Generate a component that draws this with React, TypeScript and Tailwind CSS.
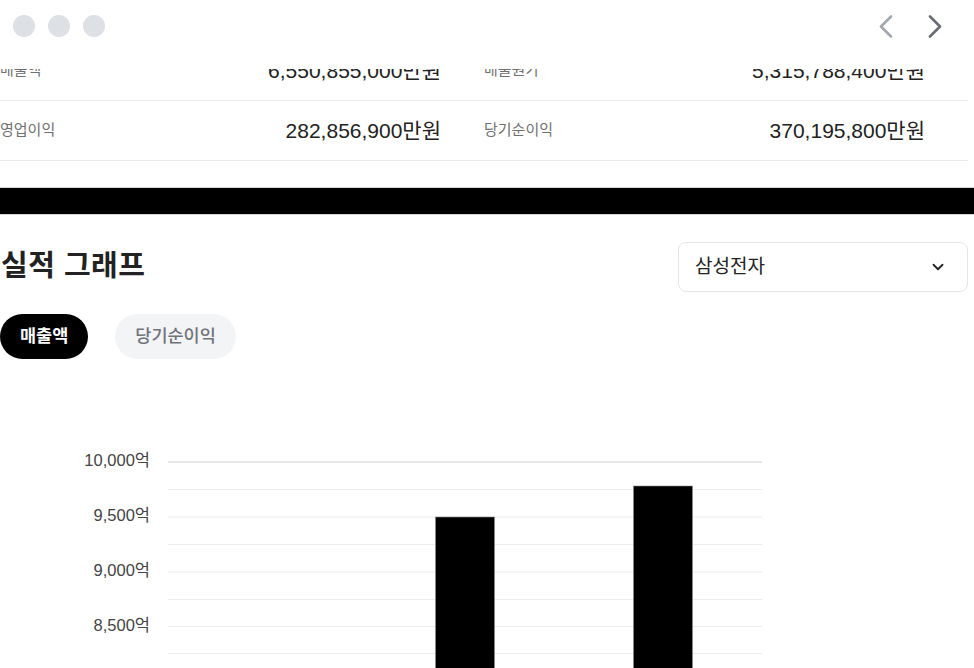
import { ChevronDown } from "lucide-react";

const rows = [
  [
    { label: "매출액", value: "6,550,855,000만원" },
    { label: "매출원가", value: "5,315,788,400만원" },
  ],
  [
    { label: "영업이익", value: "282,856,900만원" },
    { label: "당기순이익", value: "370,195,800만원" },
  ],
];

// grid steps between 10,000 and 8,000 (half-steps are drawn as well)
const gridYs = [62, 89.5, 117, 144.5, 172, 199.5, 226.5, 253.5, 281];
const yLabels = [
  { y: 62, text: "10,000억" },
  { y: 117, text: "9,500억" },
  { y: 172, text: "9,000억" },
  { y: 226.5, text: "8,500억" },
];
const bars = [
  { x: 435.5, top: 117 },
  { x: 633.5, top: 86 },
];

function Chart() {
  return (
    <svg width={974} height={300} className="block">
      {gridYs.map((y, i) => (
        <line
          key={i}
          x1={168}
          x2={762}
          y1={y}
          y2={y}
          stroke={i === 0 ? "#cfcfcf" : "#ececec"}
          strokeWidth={1.2}
        />
      ))}
      {yLabels.map((l) => (
        <text
          key={l.text}
          x={150}
          y={l.y}
          textAnchor="end"
          dominantBaseline="middle"
          fontSize={16.5}
          fill="#444"
          fontFamily='"Liberation Sans", "Noto Sans CJK KR", sans-serif'
        >
          {l.text}
        </text>
      ))}
      {bars.map((b, i) => (
        <rect key={i} x={b.x} y={b.top} width={59} height={300 - b.top} fill="#000" stroke="#8a8a8a" strokeWidth={0.6} />
      ))}
    </svg>
  );
}

export default function App() {
  return (
    <div
      className="relative h-[668px] w-[974px] overflow-hidden bg-white text-[#222]"
      style={{ fontFamily: '"Liberation Sans", "Noto Sans CJK KR", sans-serif' }}
    >
      {/* sticky top bar, sits over the scrolled table */}
      <div className="absolute inset-x-0 top-0 z-10 flex h-[69px] items-start justify-between bg-white">
        <div className="flex gap-[13px] pl-[13px] pt-[15px]">
          <span className="h-[22px] w-[22px] rounded-full bg-[#dde0e5]" />
          <span className="h-[22px] w-[22px] rounded-full bg-[#dde0e5]" />
          <span className="h-[22px] w-[22px] rounded-full bg-[#dde0e5]" />
        </div>
        <div className="flex gap-[35px] pr-[32px] pt-[15px]">
          <svg width={14} height={23} viewBox="0 0 14 23">
            <polyline points="12,1.5 2,11.5 12,21.5" fill="none" stroke="#a3a8af" strokeWidth={2.6} strokeLinecap="round" strokeLinejoin="round" />
          </svg>
          <svg width={14} height={23} viewBox="0 0 14 23">
            <polyline points="2,1.5 12,11.5 2,21.5" fill="none" stroke="#686d74" strokeWidth={2.6} strokeLinecap="round" strokeLinejoin="round" />
          </svg>
        </div>
      </div>

      <div className="pt-[41px]">
        <div className="w-[968px]">
          {rows.map((row, i) => (
            <div key={i} className="grid h-[60px] grid-cols-2 gap-x-[43px] border-b border-[#ebebeb] pr-[43px]">
              {row.map((c) => (
                <div key={c.label} className="flex items-center justify-between">
                  <span className="text-[15px] text-[#707070]">{c.label}</span>
                  <span className="text-[21px] text-[#222]">{c.value}</span>
                </div>
              ))}
            </div>
          ))}
        </div>

        <div className="mt-[26px] h-[28px] border-y border-[#d6d6d6] bg-black" />

        <div className="mt-[27px] flex h-[50px] w-[968px] items-center justify-between">
          <h2 className="pl-[1px] text-[29px] font-bold tracking-[0.5px] text-[#222]">실적 그래프</h2>
          <button className="flex h-[50px] w-[290px] items-center justify-between rounded-[8px] border border-[#e3e5e8] bg-white pl-[16px] pr-[20px]">
            <span className="text-[19px] text-[#222]">삼성전자</span>
            <ChevronDown size={18} strokeWidth={2.4} color="#222" />
          </button>
        </div>

        <div className="mt-[22px] flex gap-[27px]">
          <button className="h-[45px] rounded-full bg-black px-[20px] text-[17.5px] font-bold text-white">매출액</button>
          <button className="h-[45px] rounded-full bg-[#f3f4f6] px-[20px] text-[17.5px] font-medium text-[#6f737a]">당기순이익</button>
        </div>

        <div className="mt-[41px]">
          <Chart />
        </div>
      </div>
    </div>
  );
}
